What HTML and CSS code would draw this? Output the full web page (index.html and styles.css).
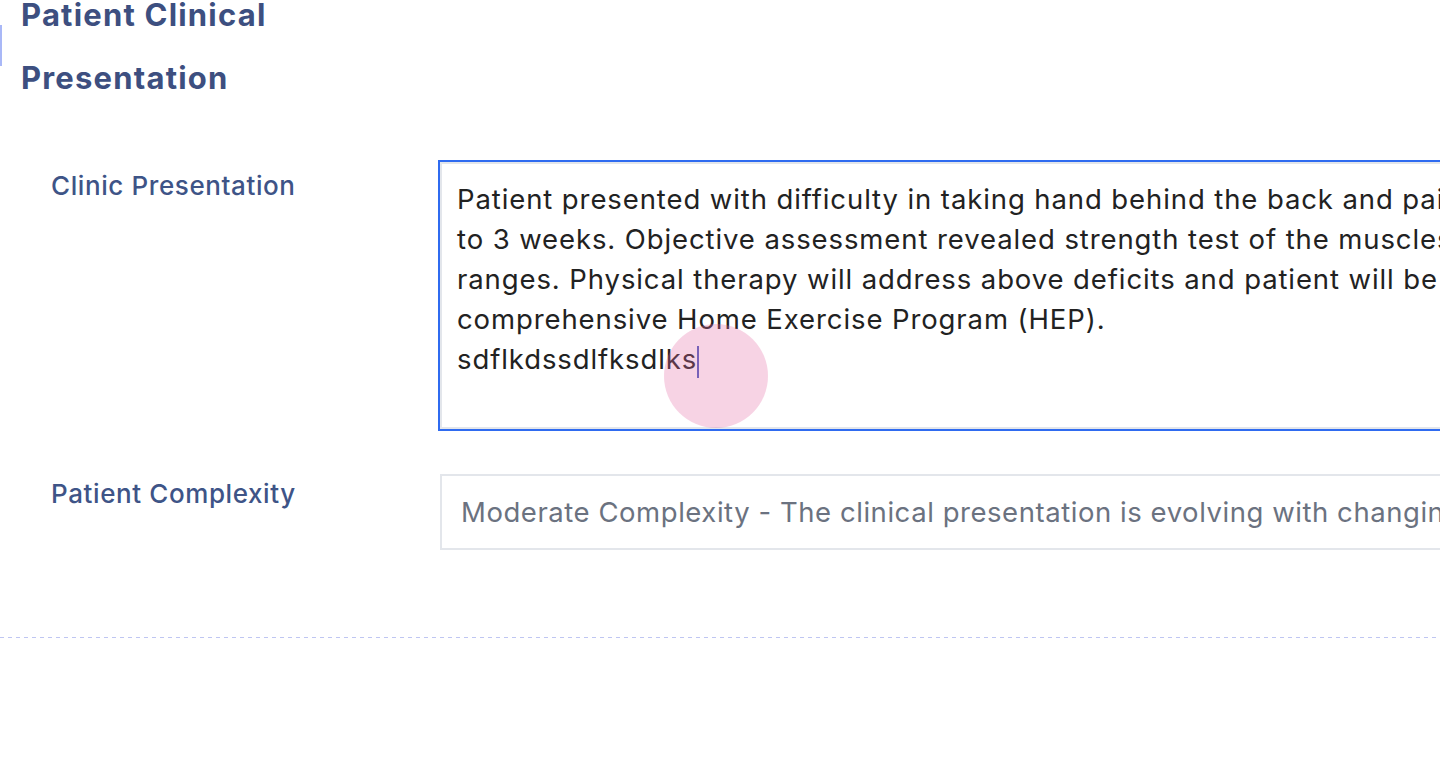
FILE: index.html
```html
<!DOCTYPE html>
<html lang="en">
<head>
<meta charset="utf-8">
<title>Patient Clinical Presentation</title>
<link rel="stylesheet" href="styles.css">
</head>
<body>
<div class="rail"></div>
<main class="page">
  <h1 class="title">Patient Clinical Presentation</h1>
  <div class="form">
    <div class="row">
      <label class="label label-first">Clinic Presentation</label>
      <div class="field field-area is-focused">
        <div class="line">Patient presented with difficulty in taking hand behind the back and pain while lifting objects overhead since 2</div>
        <div class="line">to 3 weeks. Objective assessment revealed strength test of the muscles around the shoulder joint and limited</div>
        <div class="line">ranges. Physical therapy will address above deficits and patient will be educated on posture correction and a</div>
        <div class="line">comprehensive Home Exercise Program (HEP).</div>
        <div class="line">sdflkdssdlfksdlks<span class="caret"></span></div>
      </div>
    </div>
    <div class="row">
      <label class="label label-second">Patient Complexity</label>
      <div class="field field-select">Moderate Complexity - The clinical presentation is evolving with changing characteristics</div>
    </div>
  </div>
  <div class="divider"></div>
</main>
<div class="touch"></div>
</body>
</html>
```
FILE: styles.css
```css
html, body {
  margin: 0;
  padding: 0;
  background: #ffffff;
  overflow: hidden;
  height: 761px;
}
body {
  position: relative;
  font-family: Inter, "Open Sans", "DejaVu Sans", sans-serif;
}
.rail {
  position: absolute;
  left: 0;
  top: 25px;
  width: 2px;
  height: 41px;
  background: #a9b8f7;
}
.page {
  margin-top: -17px;
}
.title {
  margin: 0;
  padding-left: 21px;
  width: 290px;
  font-size: 31px;
  font-weight: 700;
  letter-spacing: 1.2px;
  line-height: 63px;
  color: #3d4f80;
}
.form {
  margin-top: 53px;
  padding-left: 51px;
  display: flex;
  flex-direction: column;
  gap: 45px;
}
.row {
  display: grid;
  grid-template-columns: 389px 1300px;
  align-items: start;
}
.label {
  font-size: 26px;
  font-weight: 500;
  letter-spacing: 0.6px;
  line-height: 24px;
  color: #3e5487;
}
.label-first { padding-top: 12px; }
.label-second { padding-top: 8px; }
.field {
  box-sizing: border-box;
  border: 2px solid #e3e6eb;
  background: #ffffff;
  white-space: nowrap;
  overflow: hidden;
}
.field-area {
  height: 267px;
  padding: 15px 15px;
  font-size: 27.5px;
  letter-spacing: 0.9px;
  line-height: 40px;
  color: #222222;
}
.is-focused {
  box-shadow: 0 0 0 2px #2f6bf0;
}
.caret {
  display: inline-block;
  width: 2px;
  height: 32px;
  margin-left: 0;
  vertical-align: middle;
  background: #4a5cc0;
}
.field-select {
  height: 76px;
  padding: 0 19px;
  font-size: 27.5px;
  letter-spacing: 0.55px;
  line-height: 72px;
  color: #6b7280;
}
.divider {
  margin-top: 87px;
  height: 1px;
  background: repeating-linear-gradient(90deg, #bfc6f2 0 4px, transparent 4px 8px);
}
.touch {
  position: absolute;
  left: 664px;
  top: 324px;
  width: 104px;
  height: 104px;
  border-radius: 50%;
  background: rgba(230, 110, 165, 0.3);
  pointer-events: none;
}
```
